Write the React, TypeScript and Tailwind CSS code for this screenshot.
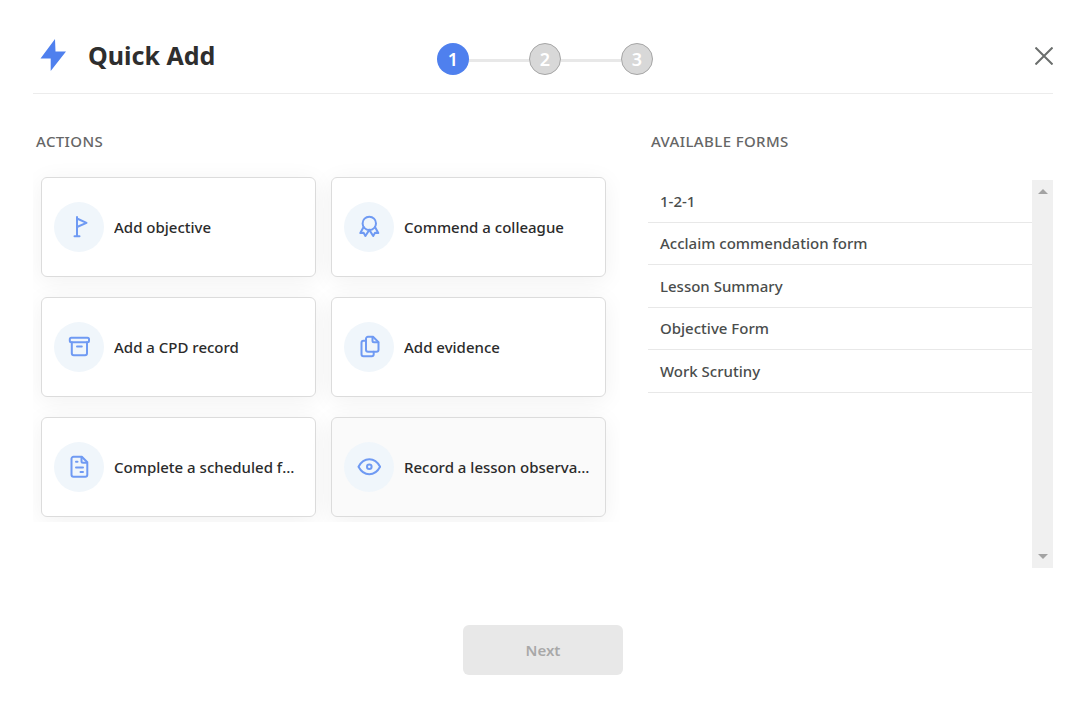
import { Fragment, useState, type ReactNode } from "react";
import clsx from "clsx";

type Action = { label: string; icon: ReactNode; active?: boolean };

const actions: Action[] = [
  {
    label: "Add objective",
    icon: (
      <>
        <path d="M10 2v19M7.5 21.2h5" />
        <path d="M10 3.5l9.5 4.3L10 12" />
      </>
    ),
  },
  {
    label: "Commend a colleague",
    icon: (
      <>
        <circle cx="12.3" cy="8.4" r="6.7" />
        <path d="M6.600 11.900L3.300 18l3.300-.2 1.800 3.200L12.300 14.900" />
        <path d="M18 11.900l3.300 6.100-3.300-.2-1.800 3.200L12.300 14.900" />
      </>
    ),
  },
  {
    label: "Add a CPD record",
    icon: (
      <>
        <rect x="2.8" y="2.8" width="19.2" height="4.5" rx="1.5" />
        <path d="M4.800 7.300v11a2 2 0 0 0 2 2h11.200a2 2 0 0 0 2-2v-11M10 11.500h4.800" />
      </>
    ),
  },
  {
    label: "Add evidence",
    icon: (
      <>
        <path d="M16 1.800h-5a2 2 0 0 0-2 2v11a2 2 0 0 0 2 2h8.500a2 2 0 0 0 2-2V7.100z" />
        <path d="M15.500 2V5.800a1.500 1.500 0 0 0 1.500 1.500h4.200" />
        <path d="M9 5.800H6.500a2 2 0 0 0-2 2v11.500a2 2 0 0 0 2 2h8.200a2 2 0 0 0 2-2V16.800" />
      </>
    ),
  },
  {
    label: "Complete a scheduled form",
    icon: (
      <>
        <path d="M14.800 1.800H6.500a2 2 0 0 0-2 2v16a2 2 0 0 0 2 2h11.800a2 2 0 0 0 2-2V7.300z" />
        <path d="M14.500 2V6.300a1.500 1.500 0 0 0 1.500 1.500h4" />
        <path d="M9 6.800h1.500M9 12.600h7M13.500 17h2.500" />
      </>
    ),
  },
  {
    label: "Record a lesson observation",
    active: true,
    icon: (
      <>
        <path d="M1.500 11.700C4 7 7.800 4.200 12.300 4.200S20.600 7 23.100 11.700c-2.500 4.700-6.300 7.500-10.800 7.500S4 16.400 1.500 11.700z" />
        <circle cx="12.3" cy="11.7" r="2.300" />
      </>
    ),
  },
];

const forms = ["1-2-1", "Acclaim commendation form", "Lesson Summary", "Objective Form", "Work Scrutiny"];

function Stepper({ current }: { current: number }) {
  return (
    <ol className="flex items-center pt-[7px] pl-1">
      {[1, 2, 3].map((n) => (
        <Fragment key={n}>
          {n > 1 && <li aria-hidden="true" className="mt-[3px] h-[3px] w-[60px] bg-[#e8e8e8]" />}
          <li
            aria-current={n === current ? "step" : undefined}
            className={clsx(
              "flex size-8 items-center justify-center rounded-full text-lg font-semibold text-white",
              n === current ? "bg-[#4f80ee]" : "border border-[#a6a6a6] bg-[#d8d8d8]",
            )}
          >
            {n}
          </li>
        </Fragment>
      ))}
    </ol>
  );
}

function ActionCard({ label, icon, active }: Action) {
  return (
    <button
      type="button"
      className={clsx(
        "flex h-[100px] min-w-0 items-center gap-[10px] rounded-md border border-[#dcdcdc] px-3 text-left shadow-[0_4px_24px_rgba(0,0,0,0.06)]",
        active ? "bg-[#fafafa]" : "bg-white",
      )}
    >
      <span className="flex size-[50px] shrink-0 items-center justify-center rounded-full bg-[#f0f6fb]">
        <svg
          viewBox="0 0 24 24"
          className="size-6 fill-none stroke-[#6f9af3] stroke-2"
          strokeLinecap="round"
          strokeLinejoin="round"
          aria-hidden="true"
        >
          {icon}
        </svg>
      </span>
      <span className="truncate text-[15px] font-medium text-[#2b2b2b]">{label}</span>
    </button>
  );
}

function SectionTitle({ children }: { children: ReactNode }) {
  return (
    <h2 className="pl-[3px] text-[15px] leading-6 font-medium tracking-wide text-[#666] uppercase">{children}</h2>
  );
}

export default function App() {
  const [selected, setSelected] = useState("");

  return (
    <main className="min-h-screen bg-white pr-[35px] pl-[33px] font-['Noto_Sans',sans-serif]">
      <header className="grid h-[94px] grid-cols-[1fr_auto_1fr] items-center border-b border-[#ececec] pt-[18px]">
        <div className="flex items-center gap-[22px] pb-[2px] pl-[7px]">
          <svg viewBox="0 0 26 34" className="h-[34px] w-[26px] fill-[#4f80ee]" aria-hidden="true">
            <path d="M15 1L.5 20.500h10.200V33L26 13.500H15.500z" />
          </svg>
          <h1 className="text-[25px] leading-8 font-bold text-[#2e2e2e]">Quick Add</h1>
        </div>
        <Stepper current={1} />
        <button type="button" aria-label="Close" className="justify-self-end">
          <svg viewBox="0 0 18 18" className="size-[18px] stroke-[#6b6e6d] stroke-2" aria-hidden="true">
            <path d="M.5 .5l17 17M17.500 .5l-17 17" />
          </svg>
        </button>
      </header>

      <div className="grid grid-cols-[587fr_405fr] gap-7 pt-[35px]">
        <section className="min-w-0">
          <SectionTitle>Actions</SectionTitle>
          <div className="mt-1 grid grid-cols-2 gap-x-[15px] gap-y-5 overflow-hidden pt-5 pr-[14px] pb-[5px] pl-2">
            {actions.map((a) => (
              <ActionCard key={a.label} {...a} />
            ))}
          </div>
        </section>

        <section className="min-w-0">
          <SectionTitle>Available forms</SectionTitle>
          <div className="mt-[27px] flex h-[388px] items-stretch">
            <ul className="grid h-[213px] min-w-0 flex-1 auto-rows-fr">
              {forms.map((f) => (
                <li key={f} className="border-b border-[#e8e8e8]">
                  <button
                    type="button"
                    onClick={() => setSelected(f)}
                    className="block h-full w-full truncate px-3 text-left text-[15px] font-medium text-[#4a4d4c]"
                  >
                    {f}
                  </button>
                </li>
              ))}
            </ul>
            <div aria-hidden="true" className="flex w-[21px] flex-col items-center justify-between bg-[#f0f0f0] py-[9px]">
              <svg viewBox="0 0 10 5" className="h-[5px] w-[10px] fill-[#a3a3a3]">
                <path d="M0 5L5 0l5 5z" />
              </svg>
              <svg viewBox="0 0 10 5" className="h-[5px] w-[10px] fill-[#a3a3a3]">
                <path d="M0 0l5 5 5-5z" />
              </svg>
            </div>
          </div>
        </section>
      </div>

      <div className="flex justify-center pt-[57px]">
        <button
          type="button"
          disabled={!selected}
          className="h-[50px] w-40 rounded-md bg-[#4f80ee] text-[15px] font-semibold text-white disabled:bg-[#e8e8e8] disabled:text-[#a8a8a8]"
        >
          Next
        </button>
      </div>
    </main>
  );
}
